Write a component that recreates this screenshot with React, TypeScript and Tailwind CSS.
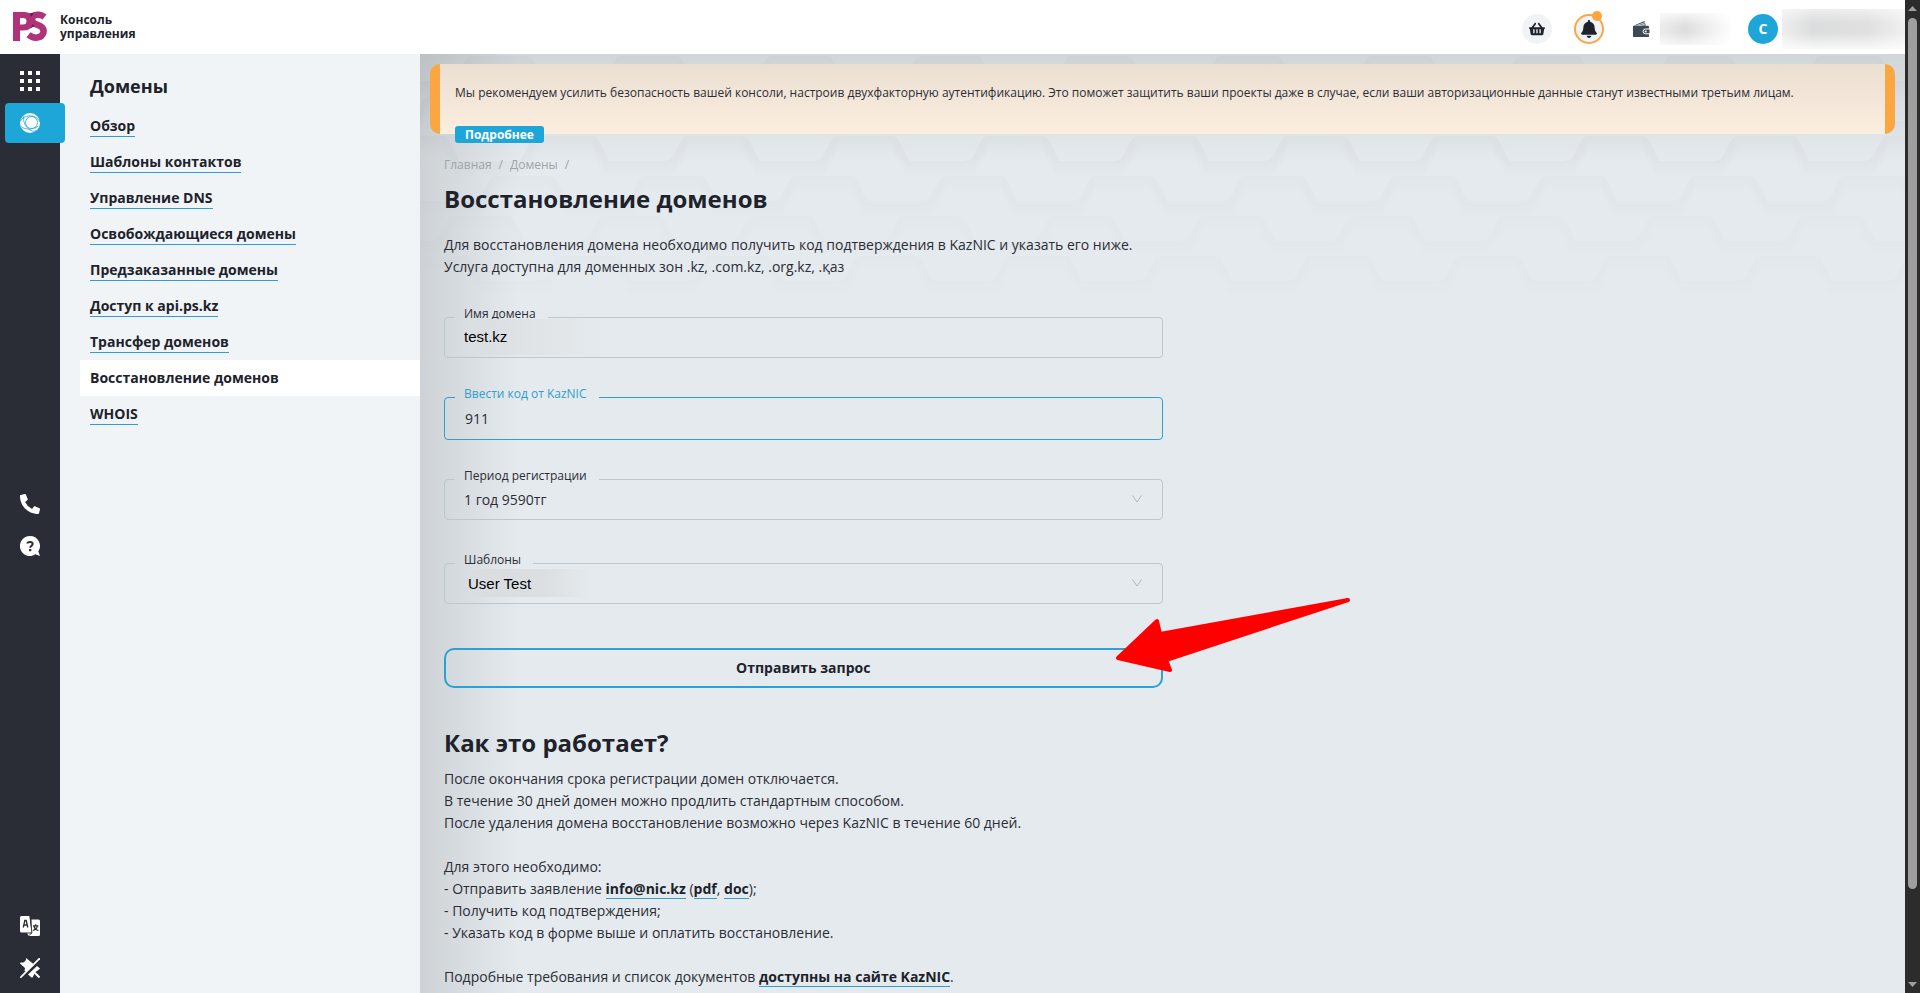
import React from 'react';
import { FaShoppingBasket, FaBell, FaPhoneAlt } from 'react-icons/fa';

interface NavItem {
  label: string;
  active?: boolean;
}

const navItems: NavItem[] = [
  { label: 'Обзор' },
  { label: 'Шаблоны контактов' },
  { label: 'Управление DNS' },
  { label: 'Освобождающиеся домены' },
  { label: 'Предзаказанные домены' },
  { label: 'Доступ к api.ps.kz' },
  { label: 'Трансфер доменов' },
  { label: 'Восстановление доменов', active: true },
  { label: 'WHOIS' },
];

const Logo: React.FC = () => (
  <svg width="36" height="32" viewBox="0 0 36 32" fill="none" aria-hidden="true">
    <path
      fillRule="evenodd"
      d="M1 1H12.500C18 1 21.500 4.500 21.500 10C21.500 16.500 17 19.500 11.500 19.500H8V30H1ZM8 7V13.500H11C13.500 13.500 14.500 12.200 14.500 10.200C14.500 8 13.300 7 11 7Z"
      fill="#b0337a"
    />
    <path
      d="M32.500 6C29.500 3.800 24 2.800 21.500 5C18.500 8 20.500 12.200 25 13.700C29.500 15.200 32.500 17.500 31.300 21.800C29.800 27.200 22 28.400 16.500 23.800"
      stroke="#b0337a"
      strokeWidth="6.500"
    />
    <path d="M17 2.500L22 1.500L19.500 6ZM20.500 13L22.500 15L18.500 17.500Z" fill="#6f1d55" />
  </svg>
);

const AppsIcon: React.FC = () => (
  <svg width="20" height="20" viewBox="0 0 20 20" fill="currentColor" aria-hidden="true">
    {[0, 8, 16].map((y) => [0, 8, 16].map((x) => <rect key={`${x}-${y}`} x={x} y={y} width="4" height="4" />))}
  </svg>
);

const GlobeIcon: React.FC = () => (
  <svg width="20" height="20" viewBox="0 0 20 20" aria-hidden="true">
    <circle cx="10" cy="10" r="10" fill="#fff" />
    <g fill="none" stroke="#1fa6d9" strokeWidth="0.800">
      <circle cx="11.500" cy="9.500" r="6" />
      <path d="M0.500 8C3 3.500 9 2 14 3.500C17.500 4.800 19 7 19.500 9" />
      <path d="M4 2.500C2.500 8 5 14.500 11 17.500C13 18.500 15 18.500 16.500 17.500" />
      <path d="M1 13.500C5 16.500 12 17.500 18.500 13" />
    </g>
  </svg>
);

const HelpIcon: React.FC = () => (
  <svg width="20" height="20" viewBox="0 0 20 20" aria-hidden="true">
    <path d="M10 0a10 10 0 1 0 5.500 18.300L20 20l-1.700-4.500A10 10 0 0 0 10 0Z" fill="#fff" />
    <path d="M7.300 7.600C7.300 5.600 12.700 5.300 12.700 8C12.700 9.700 10.200 9.700 10.200 11.700" fill="none" stroke="#2b2d36" strokeWidth="2" />
    <rect x="9.100" y="13" width="2.200" height="2.200" fill="#2b2d36" />
  </svg>
);

const TranslateIcon: React.FC = () => (
  <svg width="20" height="20" viewBox="0 0 20 20" aria-hidden="true">
    <path d="M11.500 3.500H18.500A1.500 1.500 0 0 1 20 5V18.500A1.500 1.500 0 0 1 18.500 20H9L7 17.500H11.800Z" fill="#fff" />
    <path d="M1.500 0H9.500L11.500 16.500H1.500A1.500 1.500 0 0 1 0 15V1.500A1.500 1.500 0 0 1 1.500 0Z" fill="#fff" />
    <path d="M10 0.500L12 17L9 19.500" fill="none" stroke="#2b2d36" strokeWidth="0.800" />
    <path d="M3.300 11.500L4.800 4.500H6.200L7.800 11.500M3.800 9H7.200" fill="none" stroke="#2b2d36" strokeWidth="1.300" />
    <path d="M13 9.800H18.500M15.700 8.300V9.800M17.300 9.800C17 12 15 13.800 13 14.500M14 10.500C14.500 12.500 16.500 14 18.500 14.500" fill="none" stroke="#2b2d36" strokeWidth="1.200" />
  </svg>
);

const UnpinIcon: React.FC = () => (
  <svg width="20" height="20" viewBox="0 0 20 20" aria-hidden="true">
    <path d="M6 0L14 6.500L6.500 14L4.500 13L5 10L0 5.500L0.500 4.500L3.500 4.500L6 2Z" fill="#fff" />
    <path d="M17 8L20 10.500L19 11.500L15.500 14L12.500 19.500L11.500 19.500L8 16.500Z" fill="#fff" />
    <path d="M20 0L0 20" stroke="#fff" strokeWidth="1.800" />
    <path d="M14 14L19.500 19.500" stroke="#fff" strokeWidth="2" />
  </svg>
);

const WalletIcon: React.FC = () => (
  <svg width="17" height="16" viewBox="0 0 17 16" aria-hidden="true">
    <path d="M1 4.500L11.500 0L13 4.500Z" fill="#3d4a56" />
    <path d="M3.500 4.500L12 1.500M5.500 5L13.500 2.500" stroke="#fff" strokeWidth="0.700" />
    <path d="M0 5.500C0 5 0.500 4.800 1 4.800H14.500C15.300 4.800 16 5.300 16 6V15C16 15.600 15.500 16 15 16H1C0.400 16 0 15.600 0 15Z" fill="#3d4a56" />
    <path d="M17 8H12.500A2.300 2.300 0 0 0 12.500 12.800H17Z" fill="#3d4a56" stroke="#fff" />
    <circle cx="12.700" cy="10.400" r="1" fill="#fff" />
  </svg>
);

const ChevronIcon: React.FC = () => (
  <svg className="pointer-events-none mr-5 shrink-0" width="10" height="8" viewBox="0 0 10 8" fill="none" aria-hidden="true">
    <path d="M0.500 0.500L5 7L9.500 0.500" stroke="#b0b8bd" />
  </svg>
);

const hexRows = [
  { y: 2, shift: 123, opacity: 1 },
  { y: 42, shift: 81, opacity: 1 },
  { y: 82, shift: 39, opacity: 1 },
  { y: 122, shift: 147, opacity: 0.7 },
  { y: 162, shift: 105, opacity: 0.5 },
  { y: 202, shift: 62, opacity: 0.35 },
];

// Soft shadow along hexagon edges, each row fainter than the one above
const HexPattern: React.FC = () => (
  <svg className="pointer-events-none absolute inset-x-0 top-0 h-60 w-full" aria-hidden="true">
    <defs>
      {hexRows.map((row) => (
        <pattern key={row.y} id={`hex${row.y}`} x={row.shift} y={row.y} width="150" height="40" patternUnits="userSpaceOnUse">
          {[3, 6, 9, 12, 15].map((depth) => (
            <path
              key={depth}
              d={`M0 25H57Q62 25 64 21L73 4Q75 0 80 0H132Q137 0 139 4L148 21Q149 24 150 25V${25 + depth}Q147 ${25 + depth} 145 ${21 + depth}L136 ${6 + depth}Q134 ${depth} 130 ${depth}H82Q78 ${depth} 76 ${6 + depth}L67 ${21 + depth}Q65 ${25 + depth} 60 ${25 + depth}H0Z`}
              fill="#000000"
              fillOpacity="0.004"
            />
          ))}
        </pattern>
      ))}
    </defs>
    {hexRows.map((row) => (
      <rect key={row.y} x="0" y={row.y} width="100%" height="40" fill={`url(#hex${row.y})`} opacity={row.opacity} />
    ))}
  </svg>
);

interface RailButtonProps {
  label: string;
  active?: boolean;
  children: React.ReactNode;
}

const RailButton: React.FC<RailButtonProps> = ({ label, active, children }) => (
  <button
    type="button"
    aria-label={label}
    className={`flex h-10 w-[60px] items-center rounded pl-[15px] text-white ${active ? 'bg-[#1fa6d9]' : ''}`}
  >
    {children}
  </button>
);

interface FieldProps {
  id: string;
  label: string;
  focused?: boolean;
  children: React.ReactNode;
}

const Field: React.FC<FieldProps> = ({ id, label, focused, children }) => (
  <fieldset className={`rounded border pl-[10px] ${focused ? 'border-[#2f9fcb]' : 'border-[#bcc8ce]'}`}>
    <legend className={`pr-3 pb-1.5 pl-[9px] text-xs leading-[18px] ${focused ? 'text-[#2f9fcb]' : 'text-[#2b2d36]'}`}>
      <label htmlFor={id}>{label}</label>
    </legend>
    <div className={`-mt-3 flex items-center ${focused ? 'h-[42px]' : 'h-10'}`}>{children}</div>
  </fieldset>
);

const TextLink: React.FC<{ children: React.ReactNode }> = ({ children }) => (
  <a href="#" className="border-b border-[#2f9fcb] font-bold text-[#20222b]">
    {children}
  </a>
);

const Header: React.FC = () => (
  <header className="flex h-[54px] shrink-0 items-center justify-between bg-white">
    <a href="#" className="flex items-center gap-3 pl-3 text-xs leading-[14px] font-bold">
      <Logo />
      <span>
        Консоль
        <br />
        управления
      </span>
    </a>
    <div className="flex items-center pt-1">
      <button type="button" aria-label="Корзина" className="flex h-[30px] w-[30px] items-center justify-center rounded-full bg-[#f0f4f7] text-[#20222b]">
        <FaShoppingBasket size={16} />
      </button>
      <button
        type="button"
        aria-label="Уведомления"
        className="relative ml-[22px] flex h-[30px] w-[30px] items-center justify-center rounded-full border-2 border-[#fba640] bg-[#f0f4f7] text-[#20222b]"
      >
        <FaBell size={18} />
        <span className="absolute -top-[5px] right-0 h-[10px] w-[10px] rounded-full bg-[#fba640]" />
      </button>
      <button type="button" aria-label="Баланс" className="ml-[29px] flex items-center">
        <WalletIcon />
        <span className="ml-[10px] h-8 w-[72px] bg-[linear-gradient(to_bottom,#ffffffb0,transparent_40%,transparent_60%,#ffffffb0),linear-gradient(to_right,#ececec,#dedede_35%,#ffffff)]" />
      </button>
      <button type="button" aria-label="Профиль" className="ml-4 flex items-center">
        <span className="flex h-[30px] w-[30px] items-center justify-center rounded-full bg-[#1fa6d9] text-sm font-bold text-white">C</span>
        <span className="ml-1 h-10 w-[123px] bg-[linear-gradient(to_bottom,#ffffff80,transparent_35%,transparent_60%,#ffffffd0),linear-gradient(to_right,#eeeeee,#dcddde_25%,#e0e0e0_70%,#f0f0f0)]" />
      </button>
    </div>
  </header>
);

const Rail: React.FC = () => (
  <nav aria-label="Разделы" className="relative z-10 flex w-[60px] shrink-0 flex-col justify-between bg-[#2b2d36] pt-[7px] pb-[5px] pl-[5px]">
    <div className="flex flex-col gap-0.5">
      <RailButton label="Все сервисы">
        <AppsIcon />
      </RailButton>
      <RailButton label="Домены" active>
        <GlobeIcon />
      </RailButton>
    </div>
    <div className="flex flex-col gap-0.5">
      <RailButton label="Позвонить">
        <FaPhoneAlt size={20} />
      </RailButton>
      <RailButton label="Помощь">
        <HelpIcon />
      </RailButton>
    </div>
    <div className="flex flex-col gap-0.5">
      <RailButton label="Язык">
        <TranslateIcon />
      </RailButton>
      <RailButton label="Открепить меню">
        <UnpinIcon />
      </RailButton>
    </div>
  </nav>
);

const Sidebar: React.FC = () => (
  <aside className="w-[360px] shrink-0 bg-[#f0f4f7] pt-5">
    <h2 className="pl-[30px] text-lg leading-6 font-bold">Домены</h2>
    <ul className="pt-[10px] pl-5">
      {navItems.map((item) => (
        <li key={item.label} className={`h-9 pt-2 pl-[10px] text-sm leading-5 font-bold ${item.active ? 'bg-white' : ''}`}>
          <a href="#" className={`inline-block ${item.active ? '' : 'border-b border-[#2f9fcb]'}`}>
            {item.label}
          </a>
        </li>
      ))}
    </ul>
  </aside>
);

const SecurityBanner: React.FC = () => (
  <section className="relative mx-[10px] h-[70px] rounded-[10px] border-x-[10px] border-[#fba640] bg-linear-to-b from-[#ebdfd2] to-[#fbeedf] bg-origin-padding px-[15px] pt-[18px] text-xs">
    <p className="leading-[22px]">
      Мы рекомендуем усилить безопасность вашей консоли, настроив двухфакторную аутентификацию. Это поможет защитить ваши проекты даже в случае, если ваши авторизационные данные станут известными третьим лицам.
    </p>
    <button type="button" className="mt-[22px] block rounded-[3px] bg-[#1fa6d9] px-[10px] leading-[17px] font-bold text-white">
      Подробнее
    </button>
  </section>
);

const RestoreForm: React.FC = () => (
  <form className="relative w-1/2" onSubmit={(e) => e.preventDefault()}>
    <Field id="domain" label="Имя домена">
      <input
        id="domain"
        defaultValue="test.kz"
        className="h-9 w-full bg-[linear-gradient(to_right,transparent,#dadfe2_30px,#dfe3e6_70px,transparent_150px)] px-[9px] pb-0.5 font-['Liberation_Sans',sans-serif] text-[15px] text-black outline-none"
      />
    </Field>
    <div className="h-[27px]" />
    <Field id="code" label="Ввести код от KazNIC" focused>
      <input id="code" defaultValue="911" className="w-full bg-transparent px-[10px] pt-0.5 outline-none" />
    </Field>
    <div className="h-[27px]" />
    <Field id="period" label="Период регистрации">
      <select id="period" className="w-full appearance-none bg-transparent px-[9px] pt-0.5 outline-none">
        <option>1 год 9590тг</option>
      </select>
      <ChevronIcon />
    </Field>
    <div className="h-[31px]" />
    <Field id="template" label="Шаблоны">
      <select
        id="template"
        className="h-7 w-full appearance-none bg-[linear-gradient(to_right,transparent,#d9dde0_30px,#dbdfe2_90px,transparent_135px)] px-[13px] pt-0.5 font-['Liberation_Sans',sans-serif] text-[15px] text-black outline-none"
      >
        <option>User Test</option>
      </select>
      <ChevronIcon />
    </Field>
    <button type="submit" className="mt-11 h-10 w-full rounded-[10px] border-2 border-[#2ba3d2] font-bold text-[#20222b]">
      Отправить запрос
    </button>
    <svg className="pointer-events-none absolute -right-[188px] bottom-4" width="236" height="76" viewBox="0 0 236 76" aria-hidden="true">
      <path
        d="M3 62L42 25L45 38L233 4L51 64L55 74Z"
        fill="#ff0000"
        stroke="#ff0000"
        strokeWidth="4"
        strokeLinejoin="round"
      />
    </svg>
  </form>
);

const HowItWorks: React.FC = () => (
  <section className="pt-[39px]">
    <h2 className="text-2xl leading-8 font-bold text-[#20222b]">Как это работает?</h2>
    <p className="pt-[9px]">
      После окончания срока регистрации домен отключается.
      <br />
      В течение 30 дней домен можно продлить стандартным способом.
      <br />
      После удаления домена восстановление возможно через KazNIC в течение 60 дней.
    </p>
    <p className="pt-[22px]">
      Для этого необходимо:
      <br />- Отправить заявление <TextLink>info@nic.kz</TextLink> (<TextLink>pdf</TextLink>, <TextLink>doc</TextLink>);
      <br />- Получить код подтверждения;
      <br />- Указать код в форме выше и оплатить восстановление.
    </p>
    <p className="pt-[22px]">
      Подробные требования и список документов <TextLink>доступны на сайте KazNIC</TextLink>.
    </p>
  </section>
);

const Scrollbar: React.FC = () => (
  <div className="flex w-[15px] shrink-0 flex-col items-center justify-between bg-[#2c2c2c] py-1.5" aria-hidden="true">
    <svg width="9" height="5" viewBox="0 0 9 5" fill="#9f9f9f">
      <path d="M4.500 0L9 5H0Z" />
    </svg>
    <div className="flex w-full flex-1 flex-col items-center py-[7px]">
      <div className="h-[91%] w-[9px] rounded-full bg-[#9f9f9f]" />
    </div>
    <svg width="9" height="5" viewBox="0 0 9 5" fill="#9f9f9f">
      <path d="M4.500 5L9 0H0Z" />
    </svg>
  </div>
);

const App: React.FC = () => {
  return (
    <div className="flex h-screen overflow-hidden font-['Open_Sans','Noto_Sans',sans-serif] text-[#20222b]">
      <div className="flex min-w-0 flex-1 flex-col">
        <Header />
        <div className="flex min-h-0 flex-1">
          <Rail />
          <Sidebar />
          <main className="relative min-w-0 flex-1 overflow-hidden bg-[#e5eaee] bg-[linear-gradient(to_right,#0000001a,transparent_100px),linear-gradient(to_bottom,#00000016,transparent_110px)] pt-[10px] text-sm leading-[22px] text-[#2b2d36]">
            <HexPattern />
            <SecurityBanner />
            <div className="relative px-6 pt-5">
              <nav aria-label="Навигация" className="flex gap-[7px] text-xs leading-[22px] text-[#9da5ab]">
                <a href="#">Главная</a>
                <span>/</span>
                <a href="#">Домены</a>
                <span>/</span>
              </nav>
              <h1 className="pt-[7px] text-2xl leading-8 font-bold text-[#20222b]">Восстановление доменов</h1>
              <p className="pt-[19px] pb-[27px]">
                Для восстановления домена необходимо получить код подтверждения в KazNIC и указать его ниже.
                <br />
                Услуга доступна для доменных зон .kz, .com.kz, .org.kz, .қаз
              </p>
              <RestoreForm />
              <HowItWorks />
            </div>
          </main>
        </div>
      </div>
      <Scrollbar />
    </div>
  );
};

export default App;
